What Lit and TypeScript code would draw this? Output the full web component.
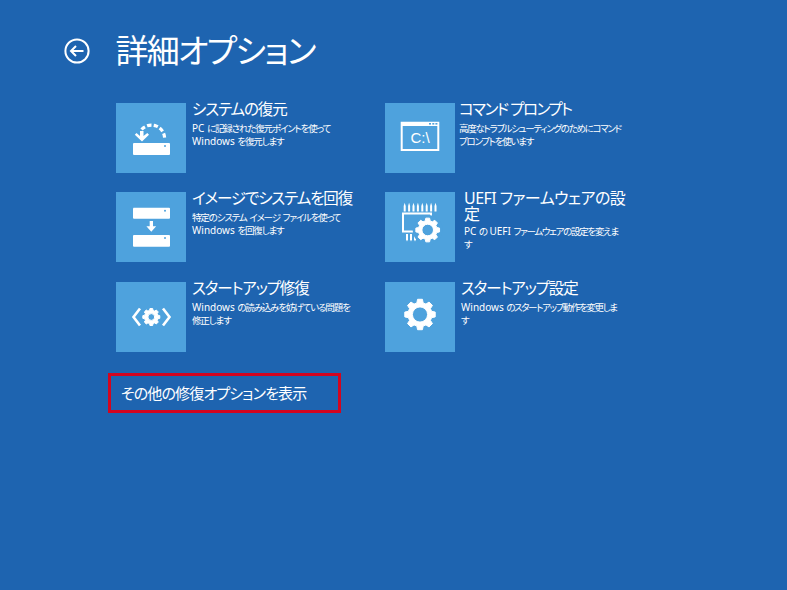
import { LitElement, html, css, svg } from "lit";
import { customElement } from "lit/decorators.js";

function gear(cx: number, cy: number, outer: number, root: number, hole: number, teeth = 8) {
  let d = "";
  const step = (Math.PI * 2) / teeth;
  for (let i = 0; i < teeth; i++) {
    const a = i * step - Math.PI / 2;
    const pts: [number, number][] = [
      [root, a - step * 0.34],
      [outer, a - step * 0.2],
      [outer, a + step * 0.2],
      [root, a + step * 0.34],
    ];
    for (const [r, t] of pts) {
      d += `${d ? "L" : "M"}${(cx + r * Math.cos(t)).toFixed(2)} ${(cy + r * Math.sin(t)).toFixed(2)}`;
    }
  }
  d += "Z";
  d += `M${cx + hole} ${cy}A${hole} ${hole} 0 1 0 ${cx - hole} ${cy}A${hole} ${hole} 0 1 0 ${cx + hole} ${cy}Z`;
  return svg`<path d=${d} fill="#fff" fill-rule="evenodd" stroke="#fff" stroke-width="1" stroke-linejoin="round"/>`;
}

const drive = (y: number, h: number) => svg`
  <path d="M17.5 ${y}H53a1 1 0 0 1 1 1V${y + h - 1}a1 1 0 0 1-1 1H18a1 1 0 0 1-1-1V${y + 1}z" fill="#fff"/>
  <circle cx="49" cy=${y + 3} r="1" fill="#4ea2dd"/>`;

const icons = {
  restore: svg`
    <path d="M25.6 26.5A13.2 13.2 0 0 1 48.6 36" fill="none" stroke="#fff" stroke-width="3.2" stroke-dasharray="4.4 2.2"/>
    <path d="M24 28V33L20.5 30L18.8 31.8L26 38.5L33 31.8L31.3 30L27.5 33V28z" fill="#fff"/>
    ${drive(40, 12)}`,
  image: svg`
    ${drive(15.7, 11)}
    <path d="M33.7 29H37V34.2H40.2L35.3 39.8L30.4 34.2H33.7z" fill="#fff"/>
    ${drive(43, 11.7)}`,
  code: svg`
    <path d="M24 26.5L17.5 35L24 43.5M47 26.5L53.5 35L47 43.5" fill="none" stroke="#fff" stroke-width="2.6"/>
    ${gear(35.3, 35, 8.6, 6.8, 3.4)}`,
  cmd: svg`
    <path d="M15.7 18.8H54.3V48H15.7z M17.7 23V46H52.3V23z" fill="#fff" fill-rule="evenodd"/>
    <rect x="44" y="20" width="2" height="1.6" fill="#4ea2dd"/>
    <rect x="47.3" y="20" width="2" height="1.6" fill="#4ea2dd"/>
    <rect x="50.4" y="20" width="2" height="1.6" fill="#4ea2dd"/>
    <text x="35" y="40" class="cmdtext">C:\\</text>`,
  uefi: svg`
    <path d="M17 20.5H47V27H45V22.5H19V38.5H30V40.5H17z" fill="#fff"/>
    ${[0, 1, 2, 3, 4, 5, 6, 7].map((i) => svg`<path d="M${18.7 + i * 4.4} 19.5V14L${19.7 + i * 4.4} 10.7L${20.7 + i * 4.4} 14V19.5z" fill="#fff"/>`)}
    ${[0, 1, 2].map((i) => svg`<path d="M${21 + i * 4} 42V47.5L${22 + i * 4} 49.5L${23 + i * 4} 47.5V42z" fill="#fff"/>`)}
    <circle cx="42.7" cy="38" r="15" fill="#4ea2dd"/>
    ${gear(42.7, 38, 12, 9.4, 5.8)}`,
  settings: svg`${gear(35, 32.5, 15.4, 12, 7.6)}`,
};

const left = [
  { icon: icons.restore, title: "システムの復元", lines: ["PC に記録された復元ポイントを使って", "Windows を復元します"], cls: "" },
  { icon: icons.image, title: "イメージでシステムを回復", lines: ["特定のシステム イメージ ファイルを使って", "Windows を回復します"], cls: "" },
  { icon: icons.code, title: "スタートアップ修復", lines: ["Windows の読み込みを妨げている問題を", "修正します"], cls: "" },
];
const right = [
  { icon: icons.cmd, title: "コマンド プロンプト", lines: ["高度なトラブルシューティングのためにコマンド", "プロンプトを使います"], cls: "r1" },
  { icon: icons.uefi, title: "UEFI ファームウェアの設\n定", lines: ["PC の UEFI ファームウェアの設定を変えま", "す"], cls: "r2" },
  { icon: icons.settings, title: "スタートアップ設定", lines: ["Windows のスタートアップ動作を変更しま", "す"], cls: "r3" },
];

@customElement("app-root")
export class AppRoot extends LitElement {
  static styles = css`
    :host {
      display: block;
      width: 787px;
      height: 590px;
      box-sizing: border-box;
      background: #1e64b0;
      color: #fff;
      font-family: "Noto Sans", "Noto Sans CJK JP", sans-serif;
      font-feature-settings: "palt";
      padding: 30px 0 0 64px;
      overflow: hidden;
    }
    .head {
      display: flex;
      align-items: center;
      gap: 25.5px;
      height: 42px;
      margin-bottom: 30.5px;
    }
    .back { width: 26px; height: 26px; flex: none; display: block; }
    h1 {
      margin: 0;
      font-size: 33px;
      font-weight: 400;
      line-height: 42px;
      letter-spacing: -1.7px;
      white-space: nowrap;
    }
    .grid {
      display: grid;
      grid-template-columns: 269px 269px;
      grid-auto-rows: 70px;
      row-gap: 19.5px;
      margin-left: 52px;
    }
    .item { display: flex; gap: 6px; min-width: 0; }
    .tile { width: 70px; height: 70px; background: #4ea2dd; flex: none; display: block; }
    .text { margin-top: -4px; white-space: nowrap; }
    .t {
      font-size: 15.5px;
      line-height: 20px;
      letter-spacing: -1.1px;
      white-space: pre-line;
      margin-bottom: 3px;
    }
    .d { font-size: 9.5px; line-height: 13px; letter-spacing: -1.15px; }
    .lat { letter-spacing: 0; font-size: 10px; white-space: pre; }
    .r1 .text { margin-left: -2px; }
    .r1 .t { letter-spacing: -1.5px; }
    .r1 .d { letter-spacing: -1.28px; }
    .r3 .d { letter-spacing: -1.4px; }
    .r2 .text { margin-left: 3px; margin-top: -1px; }
    .r2 .d { letter-spacing: -1.3px; }
    .r2 .t { font-size: 16px; line-height: 15.5px; letter-spacing: -0.55px; margin-bottom: 3px; }
    .more {
      margin: 21px 0 0 44px;
      width: 233px;
      height: 40px;
      box-sizing: border-box;
      border: 3px solid #d3051f;
      padding-left: 10px;
      display: flex;
      align-items: center;
      font-size: 15px;
      letter-spacing: -0.85px;
      white-space: nowrap;
    }
    .cmdtext {
      font-family: "Liberation Sans", sans-serif;
      font-size: 15px;
      font-weight: 400;
      fill: #fff;
      text-anchor: middle;
    }
  `;

  private line(l: string) {
    return html`<div>${l.split(/([A-Za-z ]+)/).map((p, i) => (i % 2 ? html`<span class="lat">${p}</span>` : p))}</div>`;
  }

  private row(it: { icon: unknown; title: string; lines: string[]; cls: string }) {
    return html`<div class="item ${it.cls}">
      <svg class="tile" viewBox="0 0 70 70">${it.icon}</svg>
      <div class="text">
        <div class="t">${it.title}</div>
        <div class="d">${it.lines.map((l) => this.line(l))}</div>
      </div>
    </div>`;
  }

  render() {
    const cells = left.flatMap((l, i) => [l, right[i]]);
    return html`
      <div class="head">
        <svg class="back" viewBox="0 0 26 26">
          <circle cx="13" cy="13" r="11.6" fill="none" stroke="#fff" stroke-width="2"/>
          <path d="M19.5 13H7M12 8L7 13L12 18" fill="none" stroke="#fff" stroke-width="2"/>
        </svg>
        <h1>詳細オプション</h1>
      </div>
      <div class="grid">${cells.map((c) => this.row(c))}</div>
      <div class="more">その他の修復オプションを表示</div>
    `;
  }
}
